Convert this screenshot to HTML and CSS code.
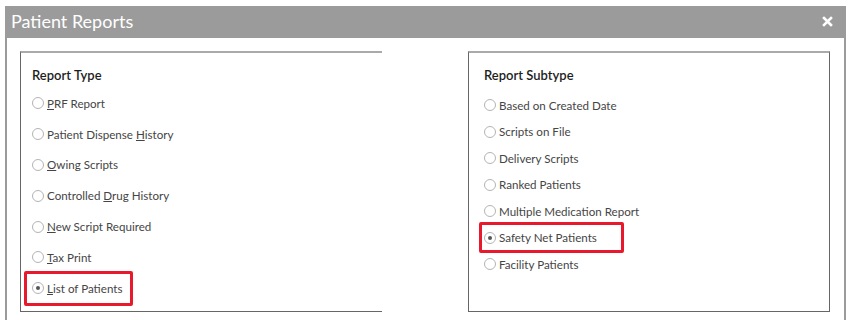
FILE: index.html
```html
<!DOCTYPE html>
<html lang="en">
<head>
    <meta charset="UTF-8">
    <meta name="viewport" content="width=device-width, initial-scale=1.0">
    <title>Patient Reports</title>
    <link rel="stylesheet" href="styles.css">
</head>
<body>
    <div class="dialog">
        <div class="titlebar">
            <span class="title">Patient Reports</span>
            <span class="close">
                <svg width="11" height="11" viewBox="0 0 11 11">
                    <path d="M2 2 L9 9 M9 2 L2 9" stroke="#fff" stroke-width="2.6" stroke-linecap="square"/>
                </svg>
            </span>
        </div>

        <div class="dialog-body">
            <!-- Report Type -->
            <div class="panel panel-type">
                <h3>Report Type</h3>
                <label class="opt"><input type="radio" name="type"><span><u>P</u>RF Report</span></label>
                <label class="opt"><input type="radio" name="type"><span>Patient Dispense <u>H</u>istory</span></label>
                <label class="opt"><input type="radio" name="type"><span><u>O</u>wing Scripts</span></label>
                <label class="opt"><input type="radio" name="type"><span>Controlled <u>D</u>rug History</span></label>
                <label class="opt"><input type="radio" name="type"><span><u>N</u>ew Script Required</span></label>
                <label class="opt"><input type="radio" name="type"><span><u>T</u>ax Print</span></label>
                <label class="opt hl hl-type"><input type="radio" name="type" checked><span><u>L</u>ist of Patients</span></label>
            </div>

            <!-- Report Subtype -->
            <div class="panel panel-sub">
                <h3>Report Subtype</h3>
                <label class="opt"><input type="radio" name="sub"><span>Based on Created Date</span></label>
                <label class="opt"><input type="radio" name="sub"><span>Scripts on File</span></label>
                <label class="opt"><input type="radio" name="sub"><span>Delivery Scripts</span></label>
                <label class="opt"><input type="radio" name="sub"><span>Ranked Patients</span></label>
                <label class="opt"><input type="radio" name="sub"><span>Multiple Medication Report</span></label>
                <label class="opt hl hl-sub"><input type="radio" name="sub" checked><span>Safety Net Patients</span></label>
                <label class="opt"><input type="radio" name="sub"><span>Facility Patients</span></label>
            </div>
        </div>
    </div>
</body>
</html>
```

FILE: styles.css
```css
body {
    margin: 0;
    background: #fff;
    font-family: Lato, "Noto Sans", Arial, sans-serif;
}
.dialog {
    margin: 6px 9px 0 5px;
    background: #9b9b9b;
    padding: 0 2px;
}
.titlebar {
    height: 32px;
    display: flex;
    align-items: center;
    justify-content: space-between;
    padding: 0 11px 0 4px;
}
.title {
    color: #fff;
    font-size: 18px;
    font-weight: 400;
    padding-bottom: 2px;
}
.close {
    display: flex;
    margin-bottom: 2px;
}
.dialog-body {
    background: #fff;
    height: 282px;
    padding: 13px 14px 0 13px;
    display: grid;
    grid-template-columns: 362px 362px;
    justify-content: space-between;
    align-items: start;
}
.panel {
    height: 261px;
    border: 1px solid #666;
    border-top: 2px solid #aaa;
    box-sizing: border-box;
    padding-top: 14px;
}
.panel-type {
    padding-left: 11px;
    border-right: none;
}
.panel-sub {
    padding-left: 15px;
}
h3 {
    margin: 0;
    font-size: 13px;
    line-height: 16px;
    font-weight: 600;
    color: #1e1e1e;
}
.panel-type h3 {
    margin-bottom: 5px;
}
.panel-sub h3 {
    margin-bottom: 9px;
}
.opt {
    display: flex;
    align-items: center;
    font-size: 11.6px;
    color: #454545;
    box-sizing: border-box;
}
.panel-type .opt {
    height: 30.8px;
}
.panel-sub .opt {
    height: 26.5px;
}
.opt input {
    appearance: none;
    -webkit-appearance: none;
    width: 12px;
    height: 12px;
    margin: 0 3px 0 0;
    border: 1px solid #b4b4b4;
    border-radius: 50%;
    background: #fff;
    display: grid;
    place-items: center;
    flex: none;
}
.opt input:checked::after {
    content: "";
    width: 4px;
    height: 4px;
    border-radius: 50%;
    background: #555;
}
.opt u {
    text-decoration-thickness: 1px;
}
.hl {
    border: 3px solid #e8192c;
    border-radius: 2px;
}
.panel-type .hl-type {
    width: 109px;
    height: 35px;
    margin: -2px 0 -2px -8px;
    padding-left: 5px;
}
.panel-sub .hl-sub {
    width: 145px;
    height: 31px;
    margin: -2.25px 0 -2.25px -5px;
    padding-left: 2px;
}
```
